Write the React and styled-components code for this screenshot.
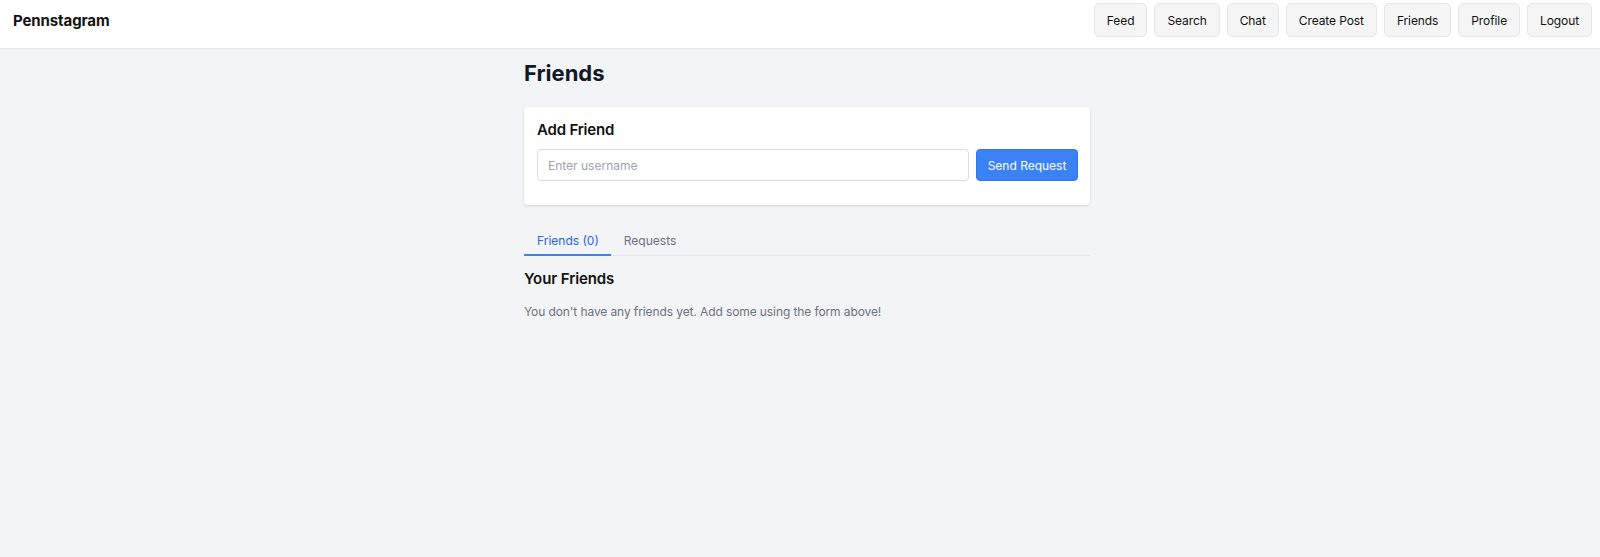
import styled, { createGlobalStyle } from "styled-components";

const GlobalStyle = createGlobalStyle`
  body {
    margin: 0;
    background: #f3f4f6;
    font-family: Inter, "Noto Sans", sans-serif;
    color: #111827;
  }
  * { box-sizing: border-box; }
`;

const navItems = ["Feed", "Search", "Chat", "Create Post", "Friends", "Profile", "Logout"];

const App = () => {
  return (
    <>
      <GlobalStyle />
      <Header>
        <Brand>Pennstagram</Brand>
        <Nav>
          {navItems.map((item) => (
            <NavButton key={item}>{item}</NavButton>
          ))}
        </Nav>
      </Header>
      <Main>
        <Title>Friends</Title>
        <Card>
          <CardTitle>Add Friend</CardTitle>
          <Form>
            <Input placeholder="Enter username" />
            <PrimaryButton>Send Request</PrimaryButton>
          </Form>
        </Card>
        <Tabs>
          <Tab active>Friends (0)</Tab>
          <Tab>Requests</Tab>
        </Tabs>
        <Section>
          <SectionTitle>Your Friends</SectionTitle>
          <Empty>You don't have any friends yet. Add some using the form above!</Empty>
        </Section>
      </Main>
    </>
  );
};

const Header = styled.header`
  height: 49px;
  background: #fff;
  border-bottom: 1px solid #e5e7eb;
  display: flex;
  align-items: center;
  justify-content: space-between;
  padding: 0 8px 8px 13px;
`;

const Brand = styled.div`
  font-size: 15px;
  font-weight: 700;
  letter-spacing: -0.1px;
  color: #111;
`;

const Nav = styled.nav`
  display: flex;
  gap: 7px;
`;

const NavButton = styled.button`
  height: 34px;
  padding: 0 12px;
  font-family: inherit;
  font-size: 12px;
  letter-spacing: -0.1px;
  color: #111;
  background: #f5f5f5;
  border: 1px solid #e6e6e6;
  border-radius: 5px;
`;

const Main = styled.main`
  max-width: 600px;
  margin: 0 auto;
  padding: 10px 10px 0 24px;
`;

const Title = styled.h1`
  margin: 0 0 19px;
  font-size: 22px;
  font-weight: 700;
  line-height: 29px;
  color: #111827;
`;

const Card = styled.div`
  background: #fff;
  border-radius: 4px;
  box-shadow: 0 1px 3px rgba(0, 0, 0, 0.12);
  padding: 13px 12px 24px 13px;
`;

const CardTitle = styled.h3`
  margin: 0 0 10px;
  font-size: 15px;
  font-weight: 600;
  letter-spacing: -0.2px;
  line-height: 19px;
  color: #111;
`;

const Form = styled.div`
  display: flex;
  gap: 7px;
`;

const Input = styled.input`
  flex: 1;
  height: 32px;
  padding: 0 10px;
  font-family: inherit;
  font-size: 12px;
  border: 1px solid #dcdcdc;
  border-radius: 4px;
  outline: none;
  &::placeholder { color: #9ca3af; }
`;

const PrimaryButton = styled.button`
  height: 32px;
  width: 102px;
  font-family: inherit;
  font-size: 12px;
  color: #fff;
  background: #3b82f6;
  border: 1px solid #2f76ee;
  border-radius: 4px;
`;

const Tabs = styled.div`
  display: flex;
  margin-top: 20px;
  border-bottom: 1px solid #e5e7eb;
`;

const Tab = styled.button`
  padding: 8px 12px 5px 13px;
  margin-bottom: -1px;
  font-family: inherit;
  font-size: 12px;
  line-height: 16px;
  background: none;
  border: none;
  border-bottom: 2px solid ${(p) => (p.active ? "#3b82f6" : "transparent")};
  color: ${(p) => (p.active ? "#2563eb" : "#6b7280")};
`;

const Section = styled.section`
  padding-top: 14px;
`;

const SectionTitle = styled.h3`
  margin: 0 0 16px;
  font-size: 15px;
  font-weight: 600;
  letter-spacing: -0.1px;
  line-height: 18px;
  color: #111;
`;

const Empty = styled.p`
  margin: 0;
  font-size: 12px;
  letter-spacing: -0.1px;
  line-height: 16px;
  color: #6b7280;
`;

export default App;
